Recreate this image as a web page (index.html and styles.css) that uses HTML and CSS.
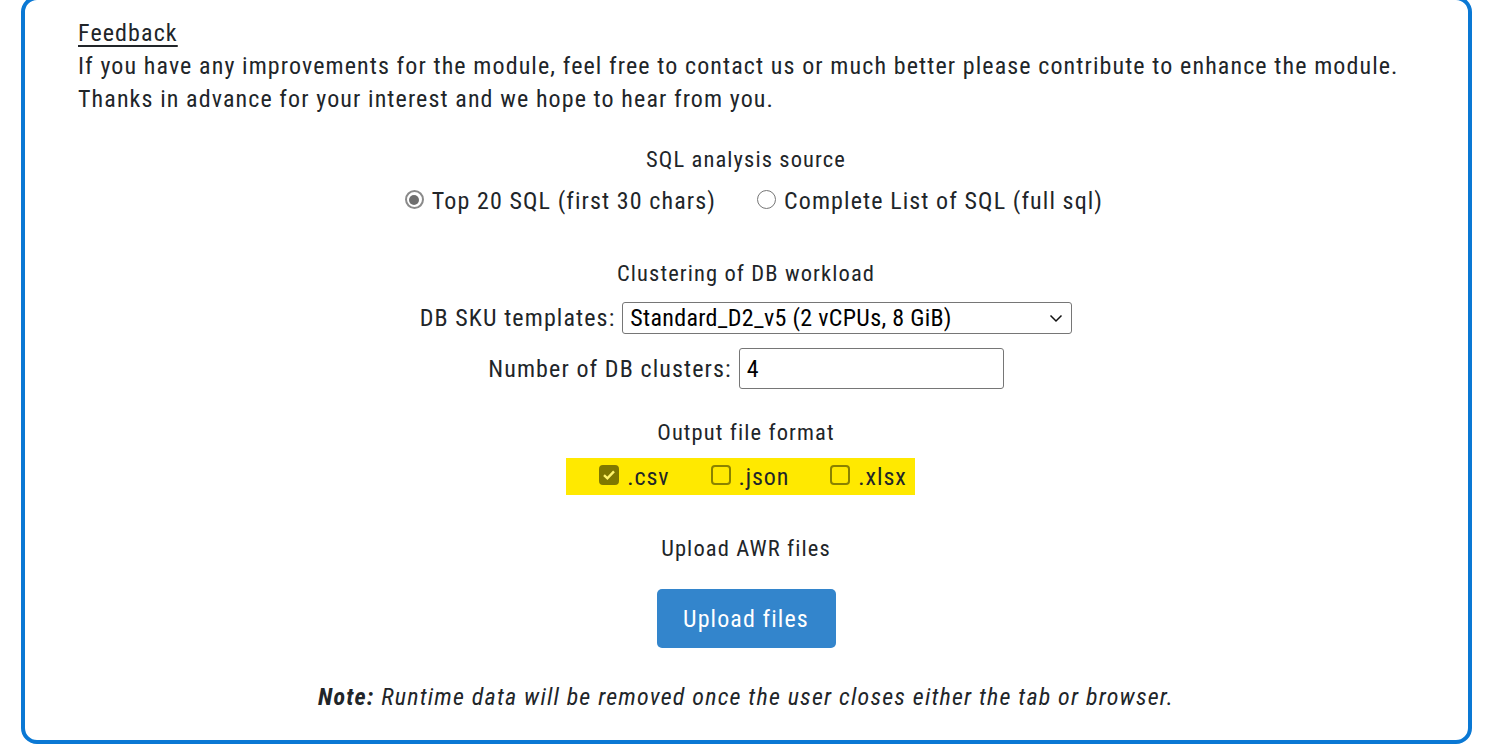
FILE: index.html
```html
<!DOCTYPE html>
<html lang="en">
<head>
<meta charset="utf-8">
<title>AWR analysis</title>
<link rel="stylesheet" href="styles.css">
</head>
<body>
<main class="card">
  <section class="feedback">
    <h2 class="feedback-title">Feedback</h2>
    <p class="feedback-text">If you have any improvements for the module, feel free to contact us or much better please contribute to enhance the module.</p>
    <p class="feedback-text">Thanks in advance for your interest and we hope to hear from you.</p>
  </section>

  <form class="form">
    <div class="title t-sql">SQL analysis source</div>
    <div class="radio-row">
      <label class="radio"><span class="radio-dot checked"></span>Top 20 SQL (first 30 chars)</label>
      <label class="radio"><span class="radio-dot"></span>Complete List of SQL (full sql)</label>
    </div>

    <div class="title t-cluster">Clustering of DB workload</div>
    <div class="field f-sku">
      <label class="field-label">DB SKU templates:</label>
      <div class="select">
        <span class="select-value">Standard_D2_v5 (2 vCPUs, 8 GiB)</span>
        <svg class="chevron" width="14" height="9" viewBox="0 0 14 9"><path d="M1.5 1.5 L7 7 L12.5 1.5" fill="none" stroke="#111" stroke-width="1.5"/></svg>
      </div>
    </div>
    <div class="field f-num">
      <label class="field-label">Number of DB clusters:</label>
      <div class="input">4</div>
    </div>

    <div class="title t-output">Output file format</div>
    <div class="formats">
      <label class="check"><span class="box checked"><svg width="14" height="12" viewBox="0 0 14 12"><path d="M2 6.2 L5.4 9.4 L12 2.4" fill="none" stroke="#fff46a" stroke-width="2.4"/></svg></span>.csv</label>
      <label class="check"><span class="box"></span>.json</label>
      <label class="check"><span class="box"></span>.xlsx</label>
    </div>

    <div class="title t-upload">Upload AWR files</div>
    <button type="button" class="upload">Upload files</button>

    <p class="note"><b>Note:</b> Runtime data will be removed once the user closes either the tab or browser.</p>
  </form>
</main>
</body>
</html>
```
FILE: styles.css
```css
html, body {
  margin: 0;
  padding: 0;
  background: #fff;
}
body {
  font-family: Roboto, "Liberation Sans", sans-serif;
  font-stretch: 75%;
  color: #212529;
  font-size: 24px;
  letter-spacing: 1.1px;
  height: 745px;
  overflow: hidden;
}
.card {
  margin: -4px 26px 0 21px;
  height: 748px;
  box-sizing: border-box;
  border: 4px solid #0a78d4;
  border-radius: 16px;
  padding: 17px 40px 0 53px;
}
.feedback-title {
  margin: 0;
  font-size: 24px;
  font-weight: 400;
  line-height: 33px;
  text-decoration: underline;
  text-underline-offset: 4px;
  text-decoration-thickness: 2px;
}
.feedback-text {
  margin: 0;
  line-height: 33px;
}
.form {
  display: flex;
  flex-direction: column;
  align-items: center;
  margin-left: -14px;
}
.title {
  line-height: 36px;
  font-size: 22.5px;
}
.t-sql { margin-top: 25px; }
.radio-row {
  margin-top: 6px;
  height: 36px;
  display: flex;
  align-items: center;
  gap: 41px;
  padding-left: 16px;
}
.radio {
  display: flex;
  align-items: center;
  gap: 8px;
}
.radio-dot {
  width: 19px;
  height: 19px;
  border: 1.5px solid #767676;
  border-radius: 50%;
  box-sizing: border-box;
  display: inline-flex;
  align-items: center;
  justify-content: center;
  margin-top: -3px;
}
.radio-dot.checked {
  border: 2.5px solid #8a8a8a;
}
.radio-dot.checked::after {
  content: "";
  width: 10px;
  height: 10px;
  border-radius: 50%;
  background: #6e6e6e;
}
.t-cluster { margin-top: 36px; }
.field {
  display: flex;
  align-items: center;
  gap: 7px;
}
.f-sku { margin-top: 11px; }
.f-num { margin-top: 14px; }
.select {
  width: 450px;
  height: 32px;
  box-sizing: border-box;
  border: 1px solid #767676;
  border-radius: 3px;
  display: flex;
  align-items: center;
  justify-content: space-between;
  padding: 0 8px 0 7px;
  color: #000;
  letter-spacing: 0.3px;
}
.select-value { font-size: 24px; }
.input {
  width: 265px;
  height: 41px;
  box-sizing: border-box;
  border: 1px solid #767676;
  border-radius: 3px;
  display: flex;
  align-items: center;
  padding-left: 7px;
  color: #000;
  letter-spacing: 0;
}
.t-output { margin-top: 25px; }
.formats {
  margin-top: 8px;
  margin-right: 11px;
  height: 37px;
  background: #ffe900;
  display: flex;
  align-items: center;
  gap: 41px;
  padding: 0 8px 0 33px;
  letter-spacing: 0.9px;
}
.check {
  display: flex;
  align-items: center;
  gap: 8px;
}
.box {
  width: 20px;
  height: 20px;
  box-sizing: border-box;
  border: 2px solid #8a8200;
  border-radius: 4px;
  display: inline-flex;
  align-items: center;
  justify-content: center;
  margin-top: -4px;
}
.box.checked {
  background: #7f7800;
  border-color: #7f7800;
}
.t-upload { margin-top: 35px; }
.upload {
  margin-top: 23px;
  width: 179px;
  height: 59px;
  border: none;
  border-radius: 5px;
  background: #3385cc;
  color: #fff;
  font-family: inherit;
  font-stretch: 75%;
  font-size: 24px;
  letter-spacing: 1.1px;
}
.note {
  margin: 31px 0 0;
  line-height: 36px;
  font-style: italic;
  font-size: 24px;
  letter-spacing: 1.2px;
}
.note b { font-weight: 700; }
```
